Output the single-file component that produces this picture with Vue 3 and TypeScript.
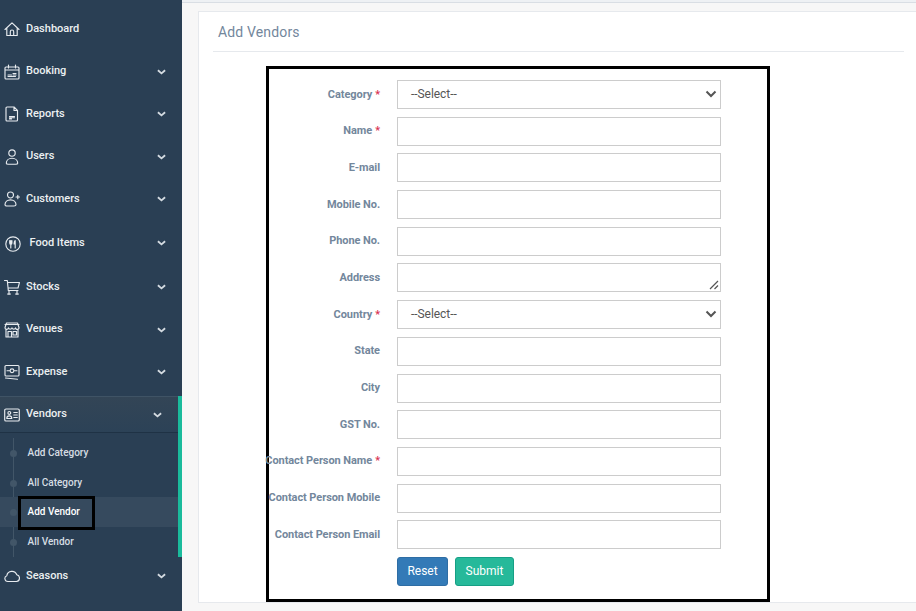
<script setup lang="ts">
interface NavItem { name: string; d: string; chevron: boolean; kind?: string }
const house = "M1 8.500 8 1.800l7 6.700M2.800 7.200V14.500h10.400V7.200M6.300 14.500v-3.800a1.700 1.700 0 0 1 3.400 0v3.800"
const top: NavItem[] = [
  { name: 'Dashboard', d: house, chevron: false },
  { name: 'Booking', d: "M2 3h12a1 1 0 0 1 1 1v10a1 1 0 0 1-1 1H2a1 1 0 0 1-1-1V4a1 1 0 0 1 1-1ZM1 6h14M4.500 1v3M11.500 1v3M4 12.500h4M4 11h3.500M8.500 12.500h3M9 11h3M9 9.500h3", chevron: true },
  { name: 'Reports', d: "M3 1h7l3.500 3.500v9.500a1 1 0 0 1-1 1h-9.500a1 1 0 0 1-1-1V2a1 1 0 0 1 1-1ZM10 1v3.500h3.500M5.500 10.500h5M5.500 11.700h5M5.500 12.900h2", chevron: true },
  { name: 'Users', d: "M8 .8a3.200 3.200 0 1 1 0 6.400A3.200 3.200 0 0 1 8 .8ZM2.300 14.200c0-3 2.600-5 5.700-5s5.700 2 5.700 5c0 .6-1 1-2 1H4.300c-1 0-2-.4-2-1Z", chevron: true },
  { name: 'Customers', d: "M6.500 1a3 3 0 1 1 0 6 3 3 0 0 1 0-6ZM1 13.800c0-3 2.500-5 5.500-5s5.500 2 5.500 5c0 .7-1 1.200-2 1.200H3c-1 0-2-.5-2-1.200ZM12 6h3.500M13.800 4.300v3.400", chevron: true },
  { name: 'Food Items', d: "M8 .8a7.200 7.200 0 1 1 0 14.400A7.200 7.200 0 0 1 8 .8ZM4.700 4.500v2.500c0 1 .6 1.500 1.100 1.500s1.100-.5 1.100-1.500V4.500M5.800 4.500V12M10.200 4.500c-.8.600-1.100 2-1.100 3.500h1.100v4M10.200 4.500V12", chevron: true, kind: 'food' },
  { name: 'Stocks', d: "M.5 1.500h2.800l1 10h9.700M3.500 3.500h12l-1.500 5.500H4M5 11.500V15.500M13 11.500V15.500M3.500 15h3M11.500 15h3", chevron: true, kind: 'stocks' },
  { name: 'Venues', d: "M2.500 1h11l1.500 4.500a1.700 1.700 0 0 1-3.500.3 1.800 1.800 0 0 1-3.500 0 1.800 1.800 0 0 1-3.500 0A1.700 1.700 0 0 1 1 5.500ZM1 2.500h14M2 7.500v7.500h12V7.500M4 15v-5.500h3.500V15M9 9.500h3.500V13H9Z", chevron: true },
  { name: 'Expense', d: "M2 1.500h12a1 1 0 0 1 1 1V11a1 1 0 0 1-1 1H2a1 1 0 0 1-1-1V2.500a1 1 0 0 1 1-1ZM8 4.800a1.900 1.900 0 1 1 0 3.800 1.900 1.900 0 0 1 0-3.800ZM3 6.700h3M10 6.700h3M1.500 14l12 1.200", chevron: true },
]
const idCard = "M2 2h12a1.300 1.300 0 0 1 1.300 1.300v9.400A1.300 1.300 0 0 1 14 14H2a1.300 1.300 0 0 1-1.300-1.300V3.300A1.300 1.300 0 0 1 2 2ZM5.300 4.500a1.400 1.400 0 1 1 0 2.800 1.400 1.400 0 0 1 0-2.800ZM2.800 11.500c0-1.700 1-2.700 2.500-2.700s2.500 1 2.500 2.700ZM9.800 5.500h3.500M9.800 8h3.500M9.800 10.500h3.500"
const cloud = "M3.800 13.500a3 3 0 0 1-1-5.800 5.200 5.200 0 0 1 10-.9 3.400 3.400 0 0 1-.3 6.700Z"
const subs = ['Add Category', 'All Category', 'Add Vendor', 'All Vendor']
const fields: { label: string; req?: boolean; type: string }[] = [
  { label: 'Category', req: true, type: 'select' },
  { label: 'Name', req: true, type: 'input' },
  { label: 'E-mail', type: 'input' },
  { label: 'Mobile No.', type: 'input' },
  { label: 'Phone No.', type: 'input' },
  { label: 'Address', type: 'textarea' },
  { label: 'Country', req: true, type: 'select' },
  { label: 'State', type: 'input' },
  { label: 'City', type: 'input' },
  { label: 'GST No.', type: 'input' },
  { label: 'Contact Person Name', req: true, type: 'input' },
  { label: 'Contact Person Mobile', type: 'input' },
  { label: 'Contact Person Email', type: 'input' },
]
</script>

<template>
  <div class="page">
    <aside class="sidebar">
      <ul class="nav">
        <li v-for="item in top" :key="item.name" class="row" :class="item.kind">
          <svg class="icon" viewBox="0 0 16 16"><path :d="item.d" /></svg>
          <span class="name">{{ item.name }}</span>
          <svg v-if="item.chevron" class="chev" viewBox="0 0 10 6"><path d="M1 1l4 3.500L9 1" /></svg>
        </li>
      </ul>
      <div class="group">
        <div class="row active">
          <svg class="icon" viewBox="0 0 16 16"><path :d="idCard" /></svg>
          <span class="name">Vendors</span>
          <svg class="chev" viewBox="0 0 10 6"><path d="M1 1l4 3.500L9 1" /></svg>
        </div>
        <ul class="subs">
          <li v-for="s in subs" :key="s" class="sub" :class="{ current: s === 'Add Vendor' }">{{ s }}</li>
        </ul>
      </div>
      <div class="row seasons">
        <svg class="icon" viewBox="0 0 16 16"><path :d="cloud" /></svg>
        <span class="name">Seasons</span>
        <svg class="chev" viewBox="0 0 10 6"><path d="M1 1l4 3.500L9 1" /></svg>
      </div>
    </aside>
    <main class="main">
      <div class="topline"></div>
      <section class="card">
        <h2 class="title">Add Vendors</h2>
        <form class="box" @submit.prevent>
          <div v-for="f in fields" :key="f.label" class="field">
            <label class="label"><span class="label-text">{{ f.label }}<span v-if="f.req" class="req">*</span></span></label>
            <div v-if="f.type === 'select'" class="control select">
              <span class="sel-text">--Select--</span>
              <svg class="sel-chev" viewBox="0 0 12 8"><path d="M1.500 1.500 6 6l4.500-4.500" /></svg>
            </div>
            <div v-else-if="f.type === 'textarea'" class="control area">
              <svg class="grip" viewBox="0 0 10 10"><path d="M1 9 9 1M5.500 9 9 5.500" /></svg>
            </div>
            <input v-else class="control" type="text" />
          </div>
          <div class="actions">
            <button type="button" class="btn reset">Reset</button>
            <button type="submit" class="btn submit">Submit</button>
          </div>
        </form>
      </section>
    </main>
  </div>
</template>

<style>
html, body { margin: 0; overflow: hidden; }
</style>

<style scoped>
* { box-sizing: border-box; }
.page { display: flex; width: 916px; height: 611px; overflow: hidden; font-family: Roboto, "Liberation Sans", sans-serif; background: #f7f7f7; }
.sidebar { width: 182px; flex: none; background: #2a3f54; color: #ecf0f1; padding-top: 8px; }
.nav, .subs { list-style: none; margin: 0; padding: 0; }
.row { display: flex; align-items: center; height: 42.5px; padding-left: 3.500px; font-size: 11px; font-weight: 500; position: relative; }
.food { height: 44px; margin-top: 1px; padding-left: 5px; }
.food .name { margin-left: 8.500px; }
.food .chev { margin-top: -4px; }
.stocks { height: 43px; }
.icon { width: 16px; height: 16px; flex: none; fill: none; stroke: #e7ebef; stroke-width: 1.150; stroke-linecap: round; stroke-linejoin: round; }
.name { margin-left: 6.500px; margin-top: -2px; flex: 1; }
.chev { position: absolute; left: 157px; top: 50%; margin-top: -3px; width: 9px; height: 6px; fill: none; stroke: #d5dce2; stroke-width: 2; }
.group { margin-top: 2.500px; border-right: 4px solid #1abb9c; height: 161px; }
.active { height: 37px; background: linear-gradient(#334556, #2c4257); border-top: 1px solid #3f5365; border-bottom: 1px solid #1f3245; }
.active .chev { left: 153px; }
.subs { height: 124px; padding-top: 5px; position: relative; }
.subs::before { content: ""; position: absolute; left: 13px; top: 5px; bottom: 0; width: 1px; background: #425668; }
.sub { height: 29.7px; line-height: 29.7px; padding-left: 27.500px; font-size: 10px; font-weight: 500; color: #d6dde3; position: relative; }
.sub::before { content: ""; position: absolute; left: 10px; top: 12px; width: 7px; height: 7px; border-radius: 50%; background: #425668; }
.current { color: #fff; background: #364a5e; }
.current::after { content: ""; box-sizing: border-box; position: absolute; left: 18px; top: -1px; width: 77px; height: 34px; border: 3px solid #000; }
.seasons { height: 38px; }
.main { flex: 1; min-width: 0; }
.topline { height: 3px; background: #eef1f4; border-bottom: 1px solid #d9dee4; }
.card { margin: 8px 0 0 16px; background: #fff; border: 1px solid #e6e9ed; border-right: none; height: 592px; padding: 0 12px 0 14px; }
.title { margin: 0; height: 40px; padding: 11px 0 0 5px; border-bottom: 1px solid #e6e9ed; font-size: 14px; font-weight: 400; letter-spacing: .15px; line-height: 18px; color: #73879c; }
.box { margin: 14px 0 0 53px; width: 504px; height: 536px; border: 3px solid #000; padding-top: 11px; display: flex; flex-direction: column; gap: 7.690px; }
.field { display: flex; align-items: center; height: 29px; flex: none; }
.label { width: 111px; margin-right: 17px; flex: none; display: flex; justify-content: flex-end; white-space: nowrap; font-size: 11px; font-weight: 700; letter-spacing: -.07px; color: #73879c; margin-top: -1px; }
.req { color: #d9304f; margin-left: 3px; font-weight: 500; }
.control { width: 324px; height: 29px; background: #fff; border: 1px solid #ccc; padding: 0 13px; font-size: 12px; color: #555; position: relative; display: flex; align-items: center; outline: none; border-radius: 0; }
.select { justify-content: space-between; }
.sel-text { letter-spacing: -.05px; font-variant-ligatures: none; margin-top: -1px; }
.sel-chev { position: absolute; right: 3px; top: 9px; width: 12px; height: 8px; fill: none; stroke: #555; stroke-width: 2; }
.grip { position: absolute; right: 1px; bottom: 1px; width: 10px; height: 10px; fill: none; stroke: #555; stroke-width: 1.200; }
.actions { display: flex; gap: 7px; padding-left: 128px; }
.btn { height: 29px; border-radius: 3px; font: 400 12px Roboto, "Liberation Sans", sans-serif; color: #fff; padding: 0; }
.reset { width: 51px; background: #337ab7; border: 1px solid #2e6da4; }
.submit { width: 59px; background: #26b99a; border: 1px solid #169f85; }
</style>
